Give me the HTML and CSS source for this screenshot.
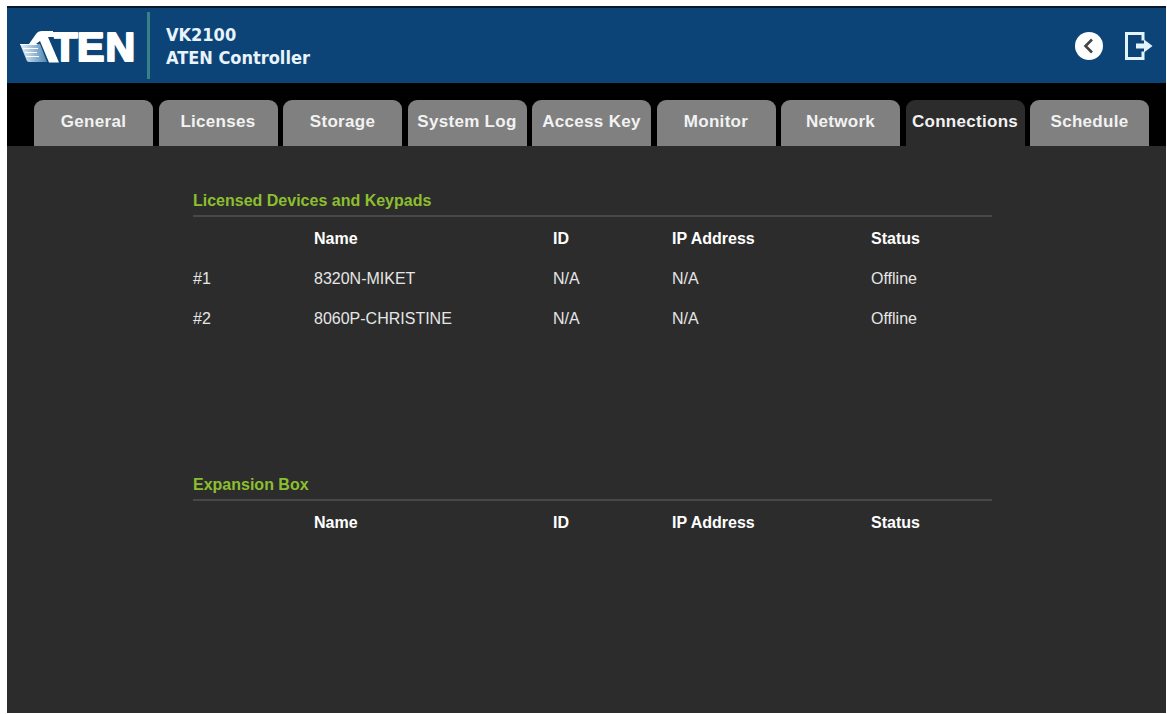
FILE: index.html
```html
<!DOCTYPE html>
<html lang="en">
<head>
  <meta charset="UTF-8" />
  <meta name="viewport" content="width=device-width, initial-scale=1.0">
  <title>VK2100 ATEN Controller</title>
  <link rel="stylesheet" href="styles.css">
</head>
<body>
  <div class="app">
    <header class="header">
      <svg class="logo" width="118" height="50" viewBox="0 -5 118 50">
        <defs>
          <linearGradient id="wing" x1="0" y1="0" x2="1" y2="0">
            <stop offset="0" stop-color="#e6f3fb" />
            <stop offset="1" stop-color="#4f86b2" />
          </linearGradient>
        </defs>
        <text class="logo-text" x="8 33.5 58 86.5" y="35">ATEN</text>
        <!-- wing over the left leg of the A -->
        <path d="M5 4H30L35 12V38H5z" fill="#0c4478" />
        <path d="M10 18 17 8Q19 5 23 5H34V11H29L40 36.500H30L21 15 17 18Z" fill="#fff" />
        <path d="M1 18H21L28 36H10Q8 36 7.500 34Z" fill="url(#wing)" />
        <path d="M1 18.500H18M4 22.500H19M6 26.500H18M7 30.500H20" stroke="#fff" stroke-width="1" />
      </svg>
      <div class="divider"></div>
      <div class="device">
        <div>VK2100</div>
        <div>ATEN Controller</div>
      </div>
      <div class="actions">
        <svg width="30" height="30" viewBox="0 0 30 30">
          <circle cx="15" cy="15" r="14" fill="#fff" />
          <path d="M18 8.500 11.500 15 18 21.500" fill="none" stroke="#444" stroke-width="2.600" />
        </svg>
        <svg width="30" height="30" viewBox="0 0 30 30">
          <path d="M19 9.500V2.500H2.500V27.500H19V20.500" fill="none" stroke="#e4f4fd" stroke-width="3" />
          <path d="M12 12.500H20V8.500L28.500 15 20 21.500V17.500H12Z" fill="#e4f4fd" />
        </svg>
      </div>
    </header>

    <nav class="tabs">
      <div class="tab">General</div>
      <div class="tab">Licenses</div>
      <div class="tab">Storage</div>
      <div class="tab">System Log</div>
      <div class="tab">Access Key</div>
      <div class="tab">Monitor</div>
      <div class="tab">Network</div>
      <div class="tab active">Connections</div>
      <div class="tab">Schedule</div>
    </nav>

    <main class="content">
      <section class="panel devices">
        <h2>Licensed Devices and Keypads</h2>
        <div class="row head">
          <span></span><span>Name</span><span>ID</span><span>IP Address</span><span>Status</span>
        </div>
        <div class="row">
          <span>#1</span><span>8320N-MIKET</span><span>N/A</span><span>N/A</span><span>Offline</span>
        </div>
        <div class="row">
          <span>#2</span><span>8060P-CHRISTINE</span><span>N/A</span><span>N/A</span><span>Offline</span>
        </div>
      </section>

      <section class="panel">
        <h2>Expansion Box</h2>
        <div class="row head">
          <span></span><span>Name</span><span>ID</span><span>IP Address</span><span>Status</span>
        </div>
      </section>
    </main>
  </div>
</body>
</html>
```
FILE: styles.css
```css
* {
  box-sizing: border-box;
}

body {
  margin: 0;
  height: 714px;
  padding: 6px 1px 1px 7px;
  background: #fff;
  font-family: "Liberation Sans", Arial, sans-serif;
  color: #e6e6e6;
  overflow: hidden;
}

.app {
  height: 707px;
  background: #2c2c2c;
}

/* Header */
.header {
  display: flex;
  align-items: center;
  height: 77px;
  padding: 0 12px 0 12px;
  background: #0c4478;
  border-top: 2px solid #08192c;
}

.logo {
  overflow: visible;
}

.logo-text {
  font-size: 41px;
  font-weight: bold;
  fill: #fff;
  stroke: #fff;
  stroke-width: 2.2px;
  stroke-linejoin: round;
}

.divider {
  width: 3px;
  height: 67px;
  margin-left: 10px;
  background: #3a8087;
}

.device {
  margin-left: 16px;
  font-family: "DejaVu Sans Condensed", "DejaVu Sans", sans-serif;
  font-stretch: condensed;
  font-size: 18px;
  line-height: 23px;
  font-weight: bold;
  color: #e8f3fb;
}

.actions {
  display: flex;
  gap: 20px;
  margin-left: auto;
}

/* Tabs */
.tabs {
  display: flex;
  gap: 5.5px;
  height: 63px;
  padding: 17px 0 0 27px;
  background: #000;
}

.tab {
  width: 119px;
  height: 46px;
  border-radius: 9px 9px 0 0;
  background: #808080;
  color: #f2f2f2;
  font-size: 17px;
  font-weight: bold;
  letter-spacing: 0.3px;
  line-height: 44px;
  text-align: center;
  white-space: nowrap;
}

.tab.active {
  background: #2c2c2c;
}

/* Tables */
.content {
  padding: 42px 0 0 186px;
}

.panel {
  width: 799px;
}

.devices {
  height: 284px;
}

.panel h2 {
  height: 29px;
  margin: 0 0 2px;
  border-bottom: 2px solid #484848;
  color: #8cbf30;
  font-size: 16px;
  line-height: 25px;
}

.row {
  display: grid;
  grid-template-columns: 121px 239px 119px 199px 1fr;
  height: 40px;
  font-size: 16px;
  line-height: 40px;
}

.head {
  font-weight: bold;
  color: #fff;
}
```
